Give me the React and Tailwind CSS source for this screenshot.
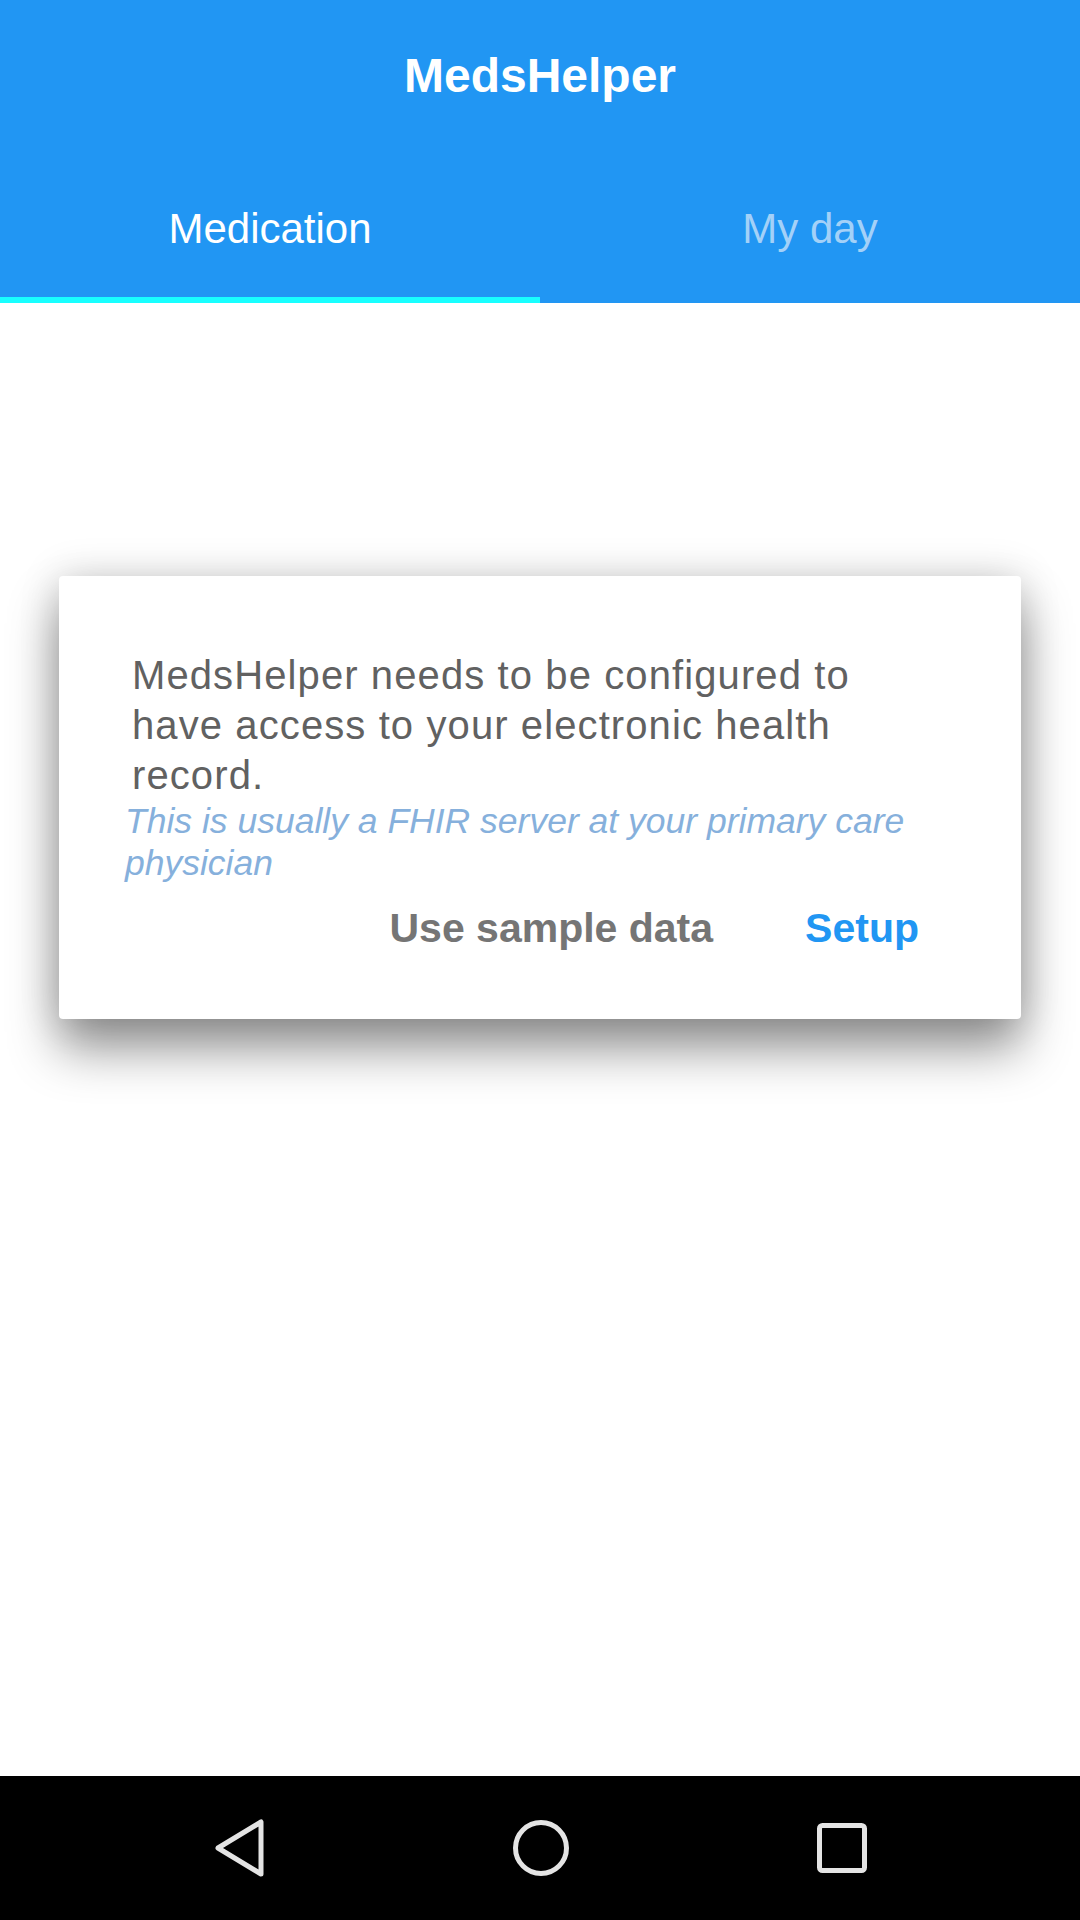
export default function App() {
  return (
    <div className="w-[1080px] h-[1920px] flex flex-col bg-white font-['Liberation_Sans',Arial,sans-serif]">
      <header className="bg-[#2196F3] h-[303px] flex flex-col">
        <div className="h-[152px] flex items-center justify-center text-white text-[48px] font-bold leading-none">
          MedsHelper
        </div>
        <div className="flex h-[151px]">
          <div className="flex-1 flex flex-col items-center">
            <div className="pt-[56px] text-[42px] leading-none text-white">Medication</div>
            <div className="mt-auto h-[6px] w-full bg-[#18FFFF]" />
          </div>
          <div className="flex-1 flex flex-col items-center">
            <div className="pt-[56px] text-[42px] leading-none text-[#a3d1f8]">My day</div>
          </div>
        </div>
      </header>

      <main className="flex-1 pt-[273px]">
        <div className="mx-[59px] bg-white rounded-[4px] pl-[73px] pr-[85px] pt-[74px] pb-[70px] shadow-[0_30px_50px_rgba(0,0,0,0.42),0_0_40px_rgba(0,0,0,0.16)]">
          <p className="text-[40px] leading-[50px] tracking-[1.1px] text-[#616161]">
            MedsHelper needs to be configured to have access to your electronic health record.
          </p>
          <p className="-ml-[7px] text-[35.5px] leading-[42px] italic text-[#86b0dc]">
            This is usually a FHIR server at your primary care physician
          </p>
          <div className="flex justify-end gap-[92px] mt-[24px] pr-[17px] text-[41px] font-bold leading-none">
            <button className="text-[#757575]">Use sample data</button>
            <button className="text-[#2196F3]">Setup</button>
          </div>
        </div>
      </main>

      <nav className="h-[144px] bg-black flex items-center justify-center gap-[248px]">
        <svg width="52" height="60" viewBox="0 0 52 60" fill="none" stroke="#e4e4e4" strokeWidth="5" strokeLinejoin="round">
          <path d="M48 4 L48 56 L5 30 Z" />
        </svg>
        <svg width="56" height="56" viewBox="0 0 56 56" fill="none" stroke="#e4e4e4" strokeWidth="5">
          <circle cx="28" cy="28" r="25.5" />
        </svg>
        <svg width="50" height="50" viewBox="0 0 50 50" fill="none" stroke="#e4e4e4" strokeWidth="5">
          <rect x="2.5" y="2.5" width="45" height="45" rx="3" />
        </svg>
      </nav>
    </div>
  );
}
